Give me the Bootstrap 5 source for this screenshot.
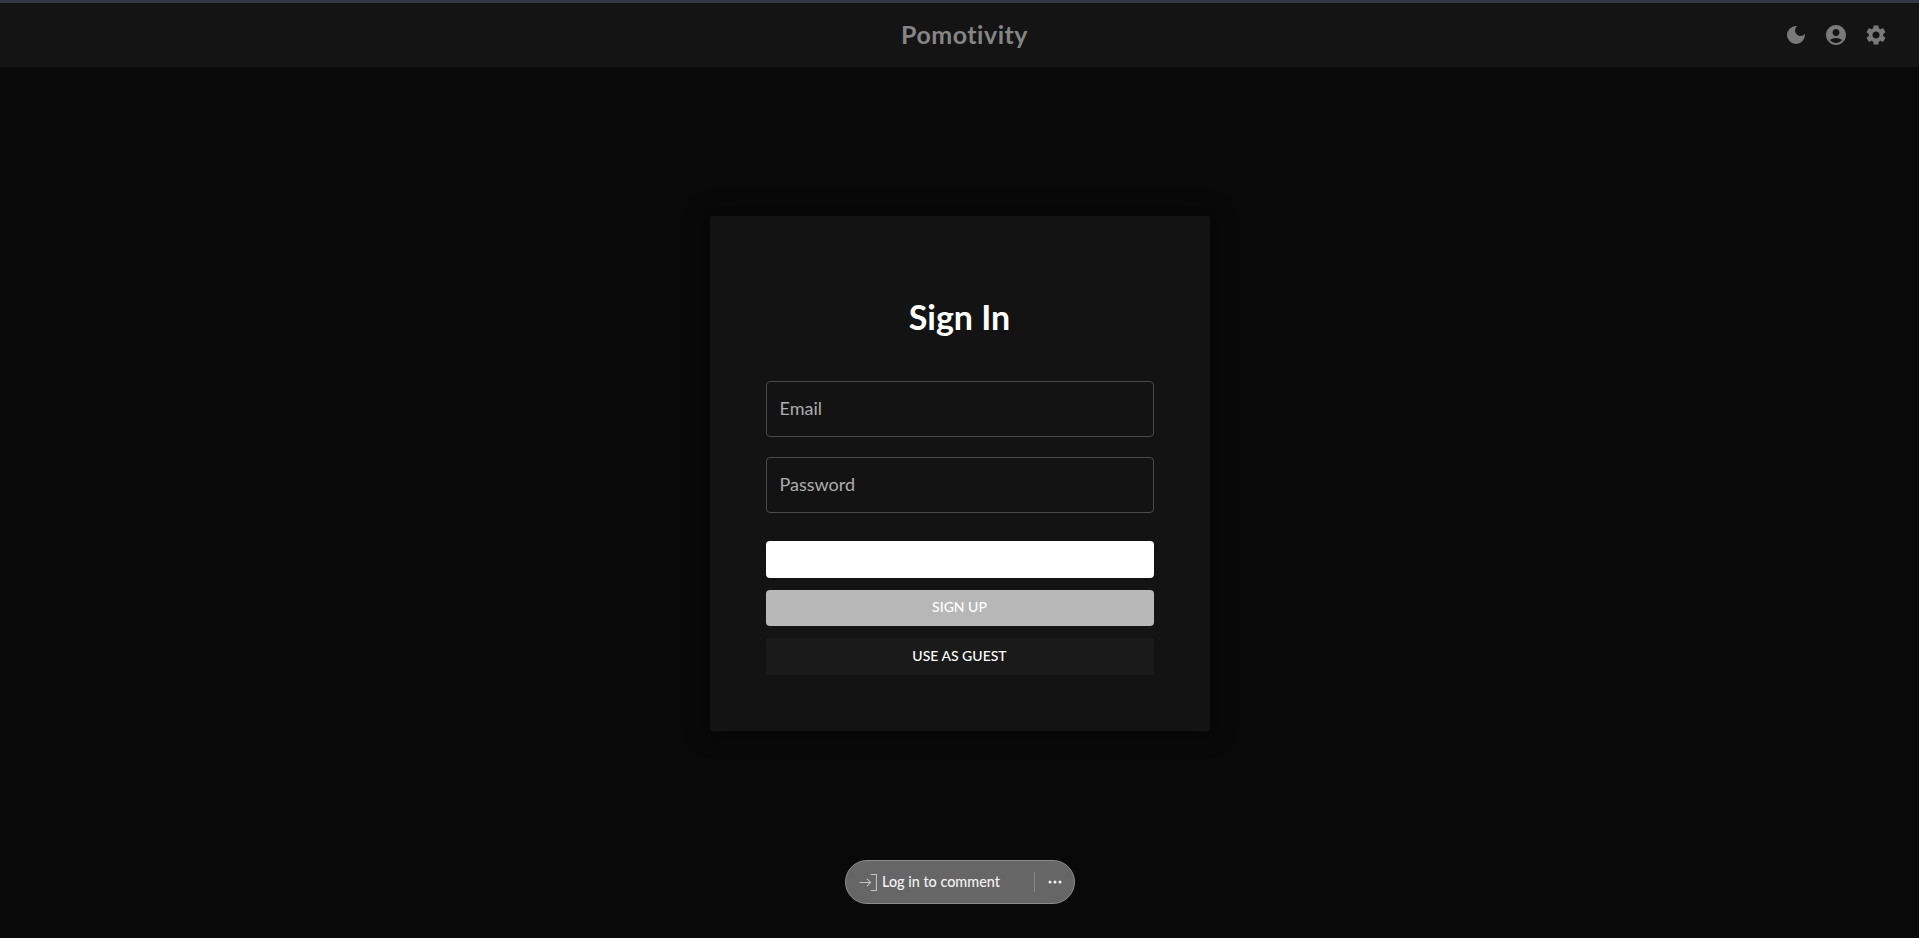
<!DOCTYPE html>
<html lang="en">
<head>
    <meta charset="UTF-8">
    <meta name="viewport" content="width=device-width, initial-scale=1.0">
    <title>Pomotivity</title>
    <link href="https://cdn.jsdelivr.net/npm/bootstrap@5.3.0/dist/css/bootstrap.min.css" rel="stylesheet">
    <style>
        body {
            background: #090909;
            font-family: "Lato", "Liberation Sans", sans-serif;
            height: 938px;
            overflow: hidden;
        }
        .top-strip { height: 3px; background: #333748; }
        .app-header { height: 64px; background: #141414; padding: 0 31px; }
        .header-side { flex: 1 1 0; }
        .logo-text {
            color: #858585;
            font-size: 25px;
            font-weight: 700;
            letter-spacing: .5px;
            padding-left: 10px;
        }
        .header-icons { gap: 16px; }
        .header-icons svg { width: 24px; height: 24px; fill: #7a7a7a; }
        .signin-box {
            width: 500px;
            height: 515px;
            margin: 149px auto 0;
            padding: 0 56px;
            background: #131313;
            border-radius: 2px;
            box-shadow: 0 0 24px rgba(0, 0, 0, .6);
        }
        .signin-title {
            color: #fff;
            font-size: 34px;
            font-weight: 700;
            line-height: 40px;
            margin: 0;
            padding-top: 81px;
            padding-bottom: 44px;
        }
        .field-input.form-control {
            height: 56px;
            background: #131313;
            border: 1px solid #4a4a4a;
            border-radius: 4px;
            color: #fff;
            font-size: 18px;
            padding: 0 13px 2px;
            margin-bottom: 20px;
        }
        .field-input.form-control::placeholder { color: #adadad; opacity: 1; }
        .action-btn.btn {
            display: block;
            width: 100%;
            border: 0;
            border-radius: 4px;
            font-size: 14px;
            font-weight: 500;
            padding: 0 0 2px;
            line-height: 34px;
            color: #fff;
        }
        .btn-white.btn { height: 37px; background: #fff; margin-top: 28px; }
        .btn-grey.btn { height: 36px; background: #b7b7b7; margin-top: 12px; }
        .btn-dark-guest.btn { height: 37px; background: #1a1a1a; margin-top: 12px; }
        .comment-pill {
            position: absolute;
            left: 845px;
            top: 860px;
            width: 230px;
            height: 44px;
            background: #666;
            border: 1px solid #8c8c8c;
            border-radius: 22px;
            color: #f2f2f2;
            font-size: 14.4px;
            font-weight: 500;
            padding-left: 13px;
        }
        .pill-icon { width: 19px; height: 19px; margin-right: 4px; }
        .pill-label { width: 152px; }
        .pill-sep { width: 1px; height: 20px; background: #858585; }
        .pill-more { width: 20px; height: 18px; margin-left: 10px; fill: #f2f2f2; }
    </style>
</head>
<body>
    <div class="top-strip"></div>

    <header class="app-header d-flex align-items-center">
        <div class="header-side"></div>
        <div class="logo-text">Pomotivity</div>
        <div class="header-side header-icons d-flex justify-content-end align-items-center">
            <svg viewBox="0 0 24 24"><path d="M12 3a9 9 0 1 0 9 9c0-.46-.04-.92-.1-1.36-.98 1.37-2.58 2.26-4.4 2.26-2.98 0-5.4-2.42-5.4-5.4 0-1.81.89-3.42 2.26-4.4C12.92 3.04 12.46 3 12 3z"/></svg>
            <svg viewBox="0 0 24 24"><path d="M12 2C6.48 2 2 6.48 2 12s4.48 10 10 10 10-4.48 10-10S17.52 2 12 2zm0 4c1.93 0 3.5 1.57 3.5 3.5S13.93 13 12 13s-3.5-1.57-3.5-3.5S10.07 6 12 6zm0 14c-2.03 0-4.43-.82-6.14-2.88C7.55 15.8 9.68 15 12 15s4.45.8 6.14 2.12C16.43 19.18 14.03 20 12 20z"/></svg>
            <svg viewBox="0 0 24 24"><path d="M19.14 12.94c.04-.3.06-.61.06-.94 0-.32-.02-.64-.07-.94l2.03-1.58c.18-.14.23-.41.12-.61l-1.92-3.32c-.12-.22-.37-.29-.59-.22l-2.39.96c-.5-.38-1.03-.7-1.62-.94l-.36-2.54c-.04-.24-.24-.41-.48-.41h-3.84c-.24 0-.43.17-.47.41l-.36 2.54c-.59.24-1.13.57-1.62.94l-2.39-.96c-.22-.08-.47 0-.59.22L2.74 8.87c-.12.21-.08.47.12.61l2.03 1.58c-.05.3-.09.63-.09.94s.02.64.07.94l-2.03 1.58c-.18.14-.23.41-.12.61l1.92 3.32c.12.22.37.29.59.22l2.39-.96c.5.38 1.03.7 1.62.94l.36 2.54c.05.24.24.41.48.41h3.84c.24 0 .44-.17.47-.41l.36-2.54c.59-.24 1.13-.56 1.62-.94l2.39.96c.22.08.47 0 .59-.22l1.92-3.32c.12-.22.07-.47-.12-.61l-2.01-1.58zM12 15.6c-1.98 0-3.6-1.62-3.6-3.6s1.62-3.6 3.6-3.6 3.6 1.62 3.6 3.6-1.62 3.6-3.6 3.6z"/></svg>
        </div>
    </header>

    <main class="signin-box">
        <h1 class="signin-title text-center">Sign In</h1>
        <form>
            <input type="email" class="form-control field-input" placeholder="Email">
            <input type="password" class="form-control field-input" placeholder="Password">
            <button type="button" class="btn action-btn btn-white"></button>
            <button type="button" class="btn action-btn btn-grey">SIGN UP</button>
            <button type="button" class="btn action-btn btn-dark-guest">USE AS GUEST</button>
        </form>
    </main>

    <div class="comment-pill d-flex align-items-center">
        <svg class="pill-icon" viewBox="0 0 18 18" fill="none" stroke="#c4c4c4" stroke-width="1"><path d="M0.5 9H11M7.5 5.5L11 9L7.5 12.5M11 1.5H16.5V16.5H11"/></svg>
        <span class="pill-label">Log in to comment</span>
        <span class="pill-sep"></span>
        <svg class="pill-more" viewBox="0 0 20 18"><circle cx="5" cy="9" r="1.5"/><circle cx="10" cy="9" r="1.5"/><circle cx="15" cy="9" r="1.5"/></svg>
    </div>

    <script src="https://cdn.jsdelivr.net/npm/bootstrap@5.3.0/dist/js/bootstrap.bundle.min.js"></script>
</body>
</html>
